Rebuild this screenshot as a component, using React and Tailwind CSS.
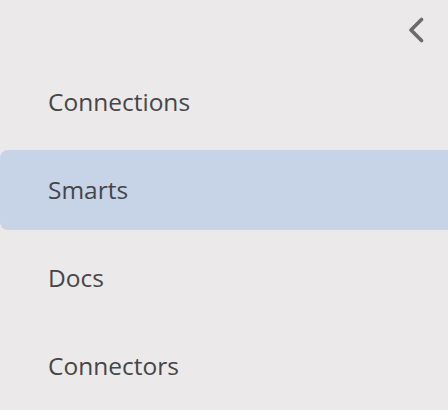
const items = ['Connections', 'Smarts', 'Docs', 'Connectors'];

export default function App() {
  const active = 'Smarts';
  return (
    <div className="h-[410px] w-[448px] overflow-hidden bg-[#ebe9ea]" style={{ fontFamily: '"Open Sans", "Noto Sans", sans-serif' }}>
      <div className="flex h-[62px] items-start justify-end pr-[24px] pt-[17px]">
        <svg width="16" height="26" viewBox="0 0 16 26" fill="none">
          <path d="M13.5 2.5 L3 13 L13.5 23.5" stroke="#6b6b6b" strokeWidth="3.6" strokeLinecap="round" strokeLinejoin="round" />
        </svg>
      </div>
      <nav className="flex flex-col gap-[8px]">
        {items.map((item) => (
          <div
            key={item}
            className={`flex h-[80px] items-center rounded-l-[8px] pl-[48px] text-[24.5px] text-[#464646] ${item === active ? 'bg-[#c7d3e6]' : ''}`}
          >
            {item}
          </div>
        ))}
      </nav>
    </div>
  );
}
